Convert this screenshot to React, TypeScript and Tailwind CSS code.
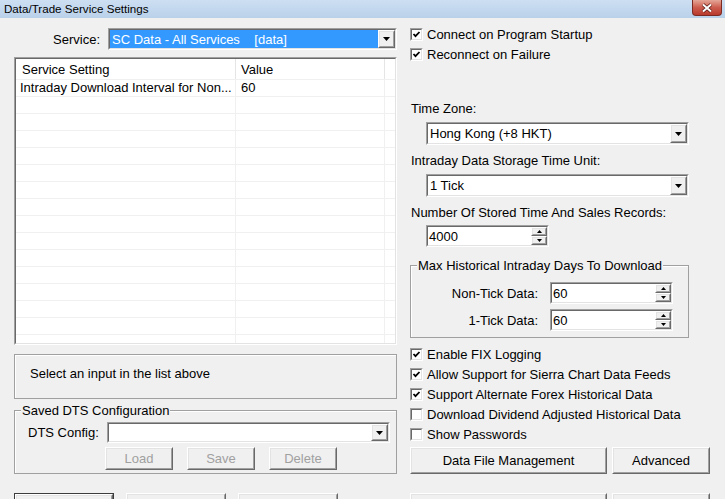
import type { ReactNode } from "react";

const FONT = "font-['Liberation_Sans',Arial,sans-serif]";

function Sunken({
  className = "",
  inner = "bg-white",
  children,
}: {
  className?: string;
  inner?: string;
  children?: ReactNode;
}) {
  return (
    <div
      className={`border border-t-[#a0a0a0] border-l-[#a0a0a0] border-r-white border-b-white ${className}`}
    >
      <div
        className={`flex h-full border border-t-[#696969] border-l-[#696969] border-r-[#e3e3e3] border-b-[#e3e3e3] ${inner}`}
      >
        {children}
      </div>
    </div>
  );
}

function Raised({
  className = "",
  children,
}: {
  className?: string;
  children?: ReactNode;
}) {
  return (
    <div
      className={`border border-t-white border-l-white border-r-[#696969] border-b-[#696969] bg-[#f0f0f0] ${className}`}
    >
      <div className="flex h-full items-center justify-center border border-t-[#e3e3e3] border-l-[#e3e3e3] border-r-[#a0a0a0] border-b-[#a0a0a0]">
        {children}
      </div>
    </div>
  );
}

function ArrowDown({ w = 7, h = 4 }: { w?: number; h?: number }) {
  return (
    <svg width={w} height={h} viewBox={`0 0 ${w} ${h}`}>
      <polygon points={`0,0 ${w},0 ${w / 2},${h}`} fill="#000" />
    </svg>
  );
}

function ArrowUp({ w = 5, h = 3 }: { w?: number; h?: number }) {
  return (
    <svg width={w} height={h} viewBox={`0 0 ${w} ${h}`}>
      <polygon points={`0,${h} ${w},${h} ${w / 2},0`} fill="#000" />
    </svg>
  );
}

function Combo({
  value,
  className = "",
  selected = false,
}: {
  value?: string;
  className?: string;
  selected?: boolean;
}) {
  return (
    <Sunken className={className}>
      <div
        className={`flex min-w-0 flex-1 items-center whitespace-pre pl-[2px] ${
          selected ? "bg-[#3399ff] text-white" : ""
        }`}
      >
        {value}
      </div>
      <Raised className="w-[17px]">
        <ArrowDown />
      </Raised>
    </Sunken>
  );
}

function Spin({ value, className = "" }: { value: string; className?: string }) {
  return (
    <Sunken className={className}>
      <div className="flex flex-1 items-center pl-[1px]">{value}</div>
      <div className="flex w-[16px] flex-col">
        <Raised className="flex-1">
          <ArrowUp />
        </Raised>
        <Raised className="flex-1">
          <ArrowDown w={5} h={3} />
        </Raised>
      </div>
    </Sunken>
  );
}

function Check({ label, checked }: { label: string; checked: boolean }) {
  return (
    <div className="flex h-[20px] items-center">
      <Sunken className="h-[13px] w-[13px]">
        {checked && (
          <svg width="9" height="9" viewBox="0 0 9 9" className="block">
            <polyline
              points="1.5,4 3.5,6.2 7.5,2"
              fill="none"
              stroke="#000"
              strokeWidth="1.8"
            />
          </svg>
        )}
      </Sunken>
      <span className="ml-[4px] whitespace-nowrap">{label}</span>
    </div>
  );
}

function Button({
  label,
  className = "",
  disabled = false,
}: {
  label?: string;
  className?: string;
  disabled?: boolean;
}) {
  return (
    <Raised className={className}>
      <span className={disabled ? "text-[#a0a0a0]" : ""}>{label}</span>
    </Raised>
  );
}

function ListRow({ name, value }: { name?: string; value?: string }) {
  return (
    <div className="flex h-[17px] shrink-0 border-b border-[#f0f0f0]">
      <div className="w-[220px] overflow-hidden whitespace-nowrap border-r border-[#f0f0f0] pl-[4px] leading-[16px]">
        {name}
      </div>
      <div className="w-[149px] border-r border-[#f0f0f0] pl-[5px] leading-[16px]">
        {value}
      </div>
      <div className="flex-1" />
    </div>
  );
}

export default function App() {
  const emptyRows = Array.from({ length: 16 });

  return (
    <div
      className={`${FONT} flex h-[499px] w-[725px] flex-col overflow-hidden bg-[#f0f0f0] text-[13px] leading-[15px] text-black`}
    >
      {/* title bar */}
      <div className="flex h-[18px] shrink-0 items-start justify-between bg-linear-to-b from-[#cddff2] to-[#b9d1ea]">
        <span className="pl-[4px] text-[11.6px] leading-[18px]">
          Data/Trade Service Settings
        </span>
        <div className="mr-[3px] flex h-[16px] w-[30px] items-center justify-center rounded-b-[4px] border border-t-0 border-[#7d2a22] bg-linear-to-b from-[#e3a597] via-[#cc5c4e] to-[#b8392b]">
          <svg width="12" height="10" viewBox="0 0 12 10">
            <path d="M2 1.5L10 8.5M10 1.5L2 8.5" stroke="#5a1a14" strokeWidth="3.6" />
            <path d="M2 1.5L10 8.5M10 1.5L2 8.5" stroke="#fff" strokeWidth="2" />
          </svg>
        </div>
      </div>

      <div className="flex">
        {/* left column */}
        <div className="ml-[14px] flex w-[383px] flex-col pt-[10px]">
          <div className="flex h-[22px] items-center">
            <span className="w-[86px] text-right">Service:</span>
            <Combo
              className="ml-[8px] h-[22px] w-[289px]"
              value={"SC Data - All Services    [data]"}
              selected
            />
          </div>

          <Sunken className="mt-[7px] h-[288px]" inner="flex-col bg-white overflow-hidden">
            <div className="flex h-[21px] shrink-0 border-b border-[#f0f0f0]">
              <div className="w-[220px] border-r border-[#e5e5e5] pl-[6px] leading-[21px]">
                Service Setting
              </div>
              <div className="w-[149px] border-r border-[#e5e5e5] pl-[5px] leading-[21px]">
                Value
              </div>
              <div className="flex-1" />
            </div>
            <ListRow name="Intraday Download Interval for Non..." value="60" />
            {emptyRows.map((_, i) => (
              <ListRow key={i} />
            ))}
          </Sunken>

          <div className="mt-[9px] h-[45px] border border-[#a0a0a0] pl-[15px] pt-[11px] shadow-[inset_1px_1px_0_#fff]">
            Select an input in the list above
          </div>

          <div className="relative mt-[11px] h-[64px] border border-[#a0a0a0] pt-[11px] shadow-[inset_1px_1px_0_#fff]">
            <span className="absolute left-[6px] top-[-8px] bg-[#f0f0f0] px-[1px]">
              Saved DTS Configuration
            </span>
            <div className="flex h-[21px] items-center">
              <span className="w-[92px] pl-[13px]">DTS Config:</span>
              <Combo className="h-[21px] w-[283px]" />
            </div>
            <div className="mt-[4px] flex gap-[14px] pl-[90px]">
              <Button label="Load" disabled className="h-[23px] w-[68px]" />
              <Button label="Save" disabled className="h-[23px] w-[68px]" />
              <Button label="Delete" disabled className="h-[23px] w-[68px]" />
            </div>
          </div>
        </div>

        {/* right column */}
        <div className="ml-[13px] flex w-[300px] flex-col pt-[6px]">
          <Check label="Connect on Program Startup" checked />
          <Check label="Reconnect on Failure" checked />

          <span className="ml-[1px] mt-[37px]">Time Zone:</span>
          <Combo className="ml-[16px] mt-[6px] h-[23px] w-[263px]" value="Hong Kong (+8 HKT)" />

          <span className="ml-[1px] mt-[8px]">Intraday Data Storage Time Unit:</span>
          <Combo className="ml-[16px] mt-[6px] h-[23px] w-[263px]" value="1 Tick" />

          <span className="ml-[1px] mt-[8px]">Number Of Stored Time And Sales Records:</span>
          <Spin className="ml-[16px] mt-[5px] h-[22px] w-[123px]" value="4000" />

          <div className="relative mt-[18px] h-[73px] w-[279px] border border-[#a0a0a0] pt-[16px] shadow-[inset_1px_1px_0_#fff]">
            <span className="absolute left-[6px] top-[-8px] bg-[#f0f0f0] px-[1px]">
              Max Historical Intraday Days To Download
            </span>
            <div className="flex h-[22px] items-center">
              <span className="w-[139px] pr-[12px] text-right">Non-Tick Data:</span>
              <Spin className="h-[22px] w-[123px]" value="60" />
            </div>
            <div className="mt-[5px] flex h-[22px] items-center">
              <span className="w-[139px] pr-[12px] text-right">1-Tick Data:</span>
              <Spin className="h-[22px] w-[123px]" value="60" />
            </div>
          </div>

          <div className="mt-[6px]">
            <Check label="Enable FIX Logging" checked />
            <Check label="Allow Support for Sierra Chart Data Feeds" checked />
            <Check label="Support Alternate Forex Historical Data" checked />
            <Check label="Download Dividend Adjusted Historical Data" checked={false} />
            <Check label="Show Passwords" checked={false} />
          </div>

          <div className="mt-[3px] flex">
            <Button label="Data File Management" className="h-[27px] w-[197px]" />
            <Button label="Advanced" className="ml-[5px] h-[27px] w-[98px]" />
          </div>
        </div>
      </div>

      {/* bottom buttons, cut off by the window edge */}
      <div className="mt-[19px] flex pl-[14px]">
        <div className="h-[24px] w-[100px] border border-[#3c3c3c]">
          <Button className="h-full w-full" />
        </div>
        <Button className="ml-[12px] h-[24px] w-[100px]" />
        <Button className="ml-[12px] h-[24px] w-[100px]" />
        <Button className="ml-[72px] h-[24px] w-[197px]" />
        <Button className="ml-[5px] h-[24px] w-[98px]" />
      </div>
    </div>
  );
}
